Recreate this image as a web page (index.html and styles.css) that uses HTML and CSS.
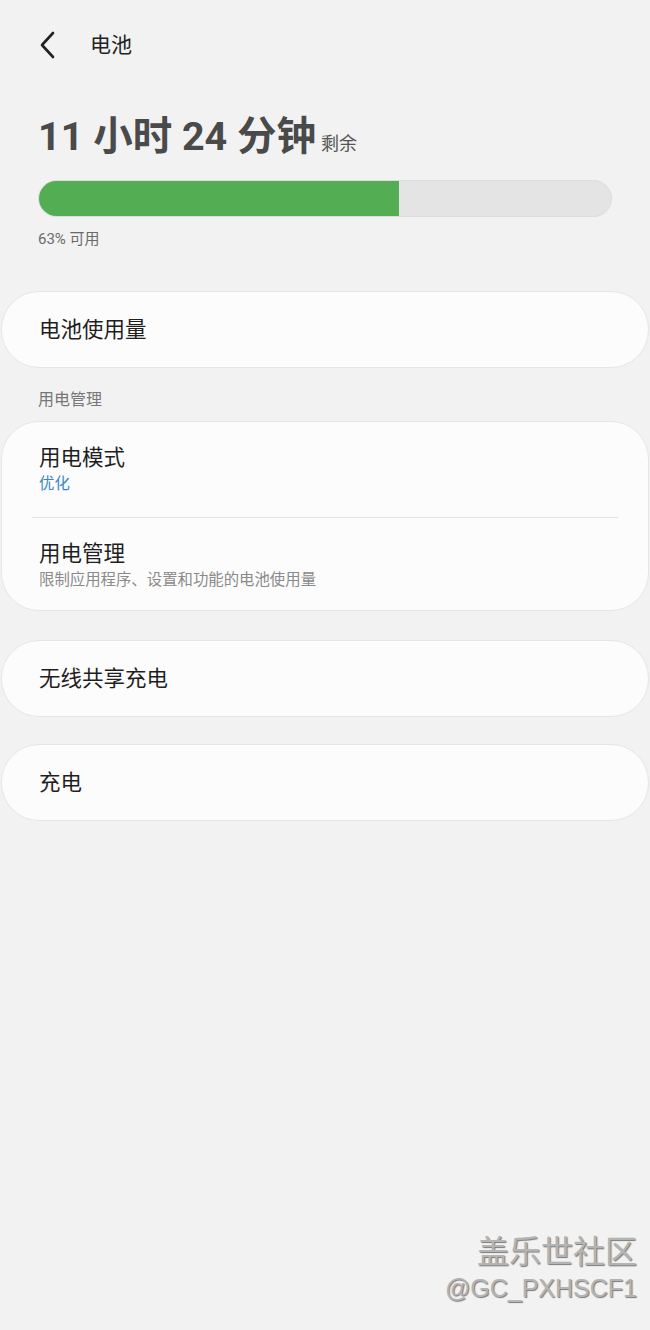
FILE: index.html
```html
<!DOCTYPE html>
<html>
<head>
    <title>电池</title>
    <link rel="stylesheet" href="styles.css">
</head>
<body>
<div class="screen">
    <div class="header">
        <svg class="back" width="22" height="28" viewBox="0 0 22 28">
            <path d="M16 2 L5 14 L16 26" fill="none" stroke="#222" stroke-width="2.6" stroke-linecap="round" stroke-linejoin="round"/>
        </svg>
        <span class="header-title">电池</span>
    </div>

    <div class="hero">
        <h1 class="remaining">11 小时 24 分钟<span class="remaining-suffix">剩余</span></h1>
        <div class="bar">
            <div class="bar-fill" style="width: 63%"></div>
        </div>
        <div class="bar-label">63% 可用</div>
    </div>

    <div class="card single">
        <div class="item-title">电池使用量</div>
    </div>

    <div class="section-label">用电管理</div>

    <div class="card group">
        <div class="item first">
            <div class="item-title">用电模式</div>
            <div class="item-sub blue">优化</div>
        </div>
        <div class="divider"></div>
        <div class="item last">
            <div class="item-title">用电管理</div>
            <div class="item-sub">限制应用程序、设置和功能的电池使用量</div>
        </div>
    </div>

    <div class="card single gap-a">
        <div class="item-title">无线共享充电</div>
    </div>

    <div class="card single gap-b">
        <div class="item-title">充电</div>
    </div>

    <!-- watermark -->
    <div class="watermark">
        <div class="wm-name">盖乐世社区</div>
        <div class="wm-user">@GC_PXHSCF1</div>
    </div>
</div>
</body>
</html>
```

FILE: styles.css
```css
body {
    margin: 0;
    padding: 0;
    background-color: #f2f2f2;
    font-family: Roboto, "Noto Sans CJK SC", sans-serif;
    color: #1f1f1f;
}

.screen {
    position: relative;
    width: 650px;
    height: 1330px;
    overflow: hidden;
}

.header {
    height: 90px;
    display: flex;
    align-items: center;
    padding-left: 37px;
}

.back {
    margin-right: 31px;
}

.header-title {
    font-size: 21px;
    line-height: 28px;
    color: #222;
}

/* Remaining time + bar */
.hero {
    padding: 0 38px;
}

.remaining {
    margin: 23px 0 0 0;
    font-size: 39.5px;
    line-height: 48px;
    height: 48px;
    font-weight: 700;
    color: #4a4a4a;
    white-space: nowrap;
}

.remaining-suffix {
    font-size: 18px;
    font-weight: 400;
    color: #555;
    margin-left: 5px;
}

.bar {
    margin-top: 19px;
    height: 37px;
    box-sizing: border-box;
    border: 1px solid #dcdcdc;
    border-radius: 19px;
    background-color: #e4e4e4;
    overflow: hidden;
}

.bar-fill {
    height: 100%;
    background-color: #53ad53;
}

.bar-label {
    margin-top: 12px;
    font-size: 15px;
    line-height: 20px;
    color: #6a6a6a;
}

/* Cards */
.card {
    margin: 0 1px;
    background-color: #fcfcfc;
    border: 1px solid #e6e6e6;
    border-radius: 38px;
    box-sizing: border-box;
}

.card.single {
    height: 77px;
    display: flex;
    align-items: center;
    padding-left: 37px;
}

.hero + .card {
    margin-top: 42px;
}

.gap-a {
    margin-top: 29px;
}

.gap-b {
    margin-top: 27px;
}

.item-title {
    font-size: 21.5px;
    line-height: 28px;
    color: #1f1f1f;
}

.item-sub {
    margin-top: 2px;
    font-size: 15.4px;
    line-height: 20px;
    color: #8a8a8a;
}

.item-sub.blue {
    color: #3a86c4;
}

.section-label {
    margin: 22px 0 11px 38px;
    font-size: 16px;
    line-height: 20px;
    color: #777;
}

.card.group {
    height: 190px;
}

.item {
    padding-left: 37px;
}

.item.first {
    padding-top: 22px;
    height: 73px;
}

.item.last {
    padding-top: 22px;
}

.divider {
    height: 1px;
    margin: 0 30px;
    background-color: #e2e2e2;
}

/* Watermark */
.watermark {
    position: absolute;
    right: 13px;
    top: 1228px;
    text-align: right;
    color: #b4b4b4;
    font-family: "Noto Sans CJK SC", sans-serif;
    text-shadow: 1px 1px 1px #7a7a7a;
}

.wm-name {
    font-size: 32px;
    line-height: 42px;
    font-weight: 400;
}

.wm-user {
    font-size: 25px;
    line-height: 36px;
    font-family: "Liberation Sans", sans-serif;
}
```
